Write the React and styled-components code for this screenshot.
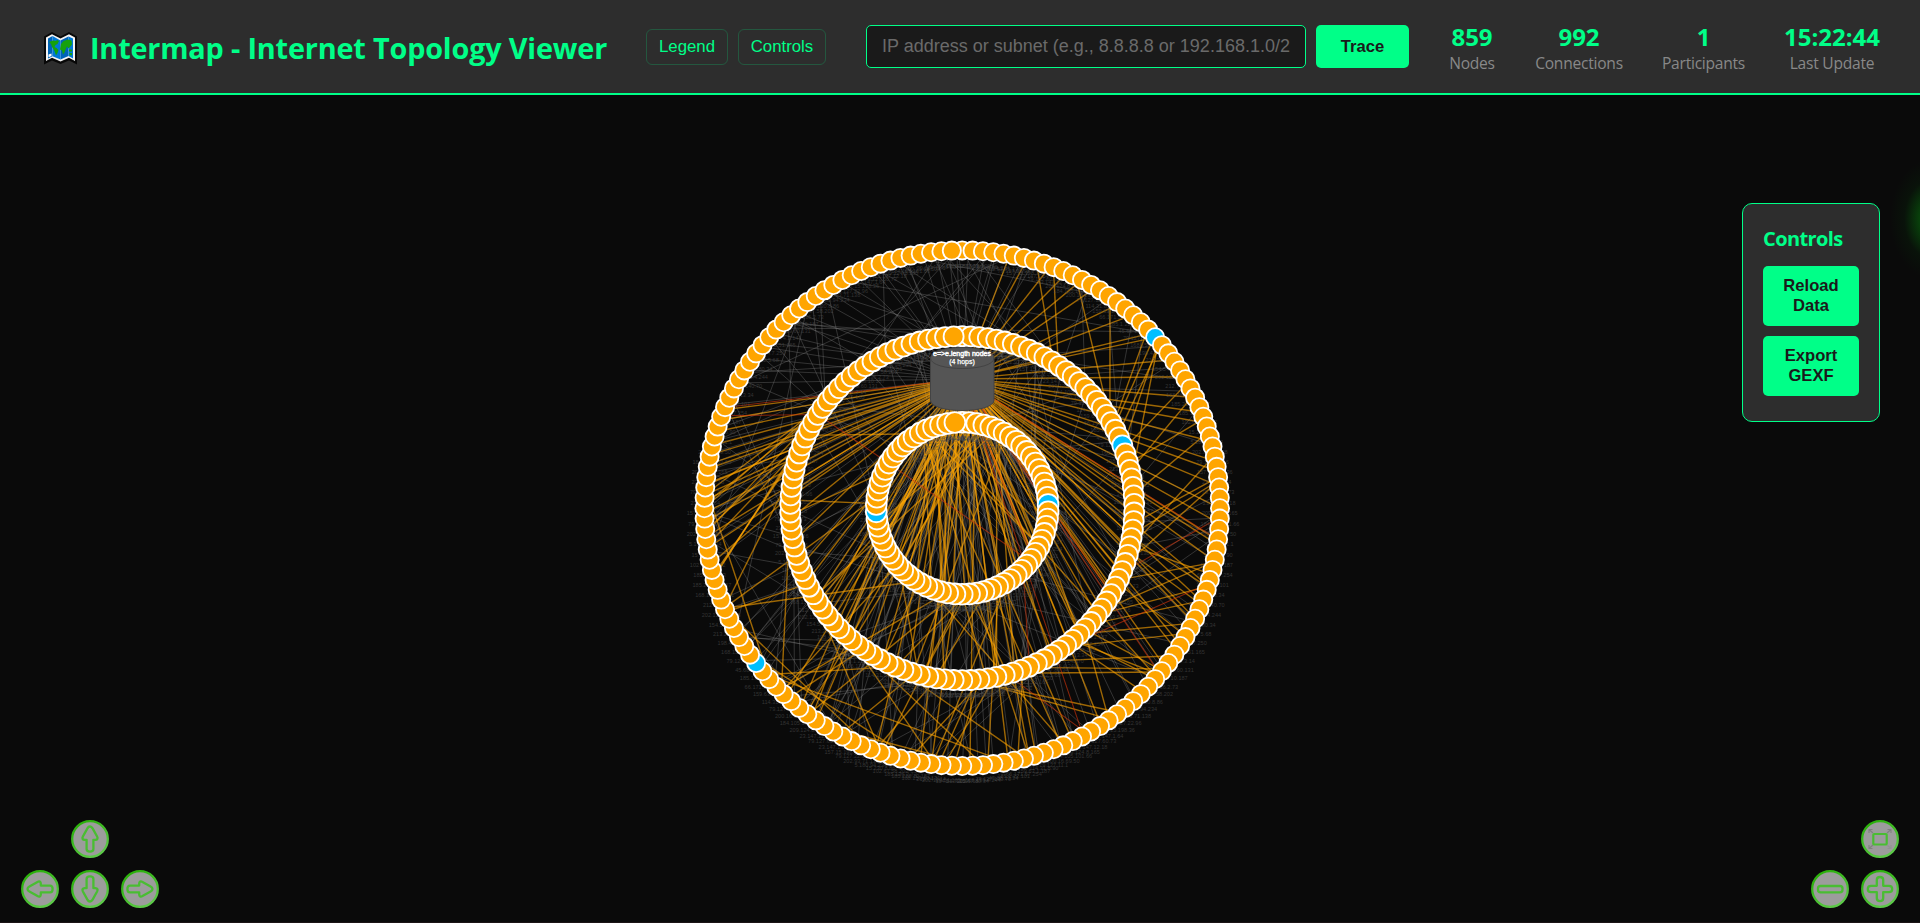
import React from 'react';
import styled, { createGlobalStyle } from 'styled-components';

const GREEN = '#00ff88';
const UI_FONT = '"Open Sans", "Noto Sans", sans-serif';
const CONTROL_FONT = '"Liberation Sans", Arial, sans-serif';

const GlobalStyle = createGlobalStyle`
  * { box-sizing: border-box; margin: 0; }
  body { margin: 0; background: #0a0a0a; color: #e0e0e0; font-family: ${UI_FONT}; overflow: hidden; }
`;

const Page = styled.div`
  display: flex;
  flex-direction: column;
  height: 100vh;
  overflow: hidden;
`;

const Header = styled.header`
  display: flex;
  align-items: center;
  gap: 40px;
  flex: none;
  height: 95px;
  padding: 0 40px;
  background: #2d2d2d;
  border-bottom: 2px solid ${GREEN};
`;

const Brand = styled.h1`
  display: flex;
  align-items: center;
  width: 566px;
  padding: 2px 0 0 3px;
  color: ${GREEN};
  font-size: 28.8px;
  line-height: 38px;
  font-weight: 700;
  letter-spacing: -0.16px;
  white-space: nowrap;
  svg { flex: none; margin-right: 12px; }
`;

const Nav = styled.nav`
  display: flex;
  gap: 10px;
`;

const NavButton = styled.button`
  width: ${(p) => p.$width}px;
  height: 36px;
  padding: 0;
  border: 1px solid rgba(0, 255, 136, 0.2);
  border-radius: 6px;
  background: transparent;
  color: ${GREEN};
  font: 16.8px ${CONTROL_FONT};
`;

const Search = styled.form`
  display: flex;
  gap: 10px;
  height: 43px;
`;

const SearchInput = styled.input`
  width: 440px;
  padding: 0 15px;
  border: 1px solid ${GREEN};
  border-radius: 5px;
  background: #1a1a1a;
  color: #e0e0e0;
  font: 18px ${CONTROL_FONT};
  &::placeholder { color: #6a6a6a; opacity: 1; }
`;

const ActionButton = styled.button`
  padding: 0 20px;
  width: ${(p) => p.$width};
  height: ${(p) => p.$height}px;
  border: 0;
  border-radius: 5px;
  background: ${GREEN};
  color: #1a1a1a;
  font: bold 16.6px/20px ${CONTROL_FONT};
`;

const Stats = styled.div`
  display: flex;
  gap: 40px;
`;

const Stat = styled.div`
  display: flex;
  flex-direction: column;
  align-items: center;
  width: ${(p) => p.$width}px;
  padding-top: 3px;
  white-space: nowrap;
`;

const StatValue = styled.div`
  color: ${GREEN};
  font-size: 24px;
  line-height: 29px;
  font-weight: 700;
`;

const StatLabel = styled.div`
  color: #888;
  font-size: 15.6px;
  line-height: 24px;
  letter-spacing: -0.25px;
`;

const Stage = styled.main`
  position: relative;
  flex: 1;
  overflow: hidden;
  background: #0a0a0a;
  border-bottom: 1px solid #1c1416;
`;

const Network = styled.svg`
  display: block;
  width: 1920px;
  height: 828px;
`;

const Glow = styled.div`
  position: absolute;
  top: 64px;
  right: -54px;
  width: 84px;
  height: 120px;
  background: radial-gradient(closest-side, #07590c 0%, #08400b 30%, rgba(9, 22, 10, 0.7) 66%, rgba(10, 10, 10, 0) 100%);
`;

const Panel = styled.aside`
  position: absolute;
  top: 108px;
  right: 40px;
  display: flex;
  flex-direction: column;
  gap: 10px;
  width: 138px;
  height: 219px;
  padding: 20px;
  border: 1px solid ${GREEN};
  border-radius: 10px;
  background: #2d2d2d;
`;

const PanelTitle = styled.h3`
  height: 32px;
  color: ${GREEN};
  font-size: 20px;
  line-height: 30px;
  letter-spacing: -0.6px;
`;

const PadGrid = styled.div`
  position: absolute;
  bottom: 13px;
  ${(p) => p.$side}: 20px;
  display: grid;
  grid-template-columns: repeat(${(p) => p.$cols}, 40px);
  grid-template-rows: repeat(2, 40px);
  gap: 10px;
  place-items: center;
`;

const PadButton = styled.button`
  grid-column: ${(p) => p.$col};
  grid-row: ${(p) => p.$row};
  width: 38px;
  height: 38px;
  padding: 0;
  border: 0;
  background: none;
  svg { display: block; }
`;

/* Deterministic pseudo random numbers keep the drawing stable between renders. */
function makeRandom(seed) {
  let s = seed;
  return () => {
    s = (s + 0x6d2b79f5) | 0;
    let t = Math.imul(s ^ (s >>> 15), 1 | s);
    t = (t + Math.imul(t ^ (t >>> 7), 61 | t)) ^ t;
    return ((t ^ (t >>> 14)) >>> 0) / 4294967296;
  };
}

const CX = 962.2;
const CY = 413.2;
const HUB = [CX, 284];

const RINGS = [
  { radius: 86, count: 74, size: 10.4, blue: [18, 55] },
  { radius: 172, count: 126, size: 10, blue: [24] },
  { radius: 257.8, count: 156, size: 9.1, blue: [21, 101] },
];

const at = (ring, degrees) => {
  const a = (degrees * Math.PI) / 180;
  const r = RINGS[ring].radius;
  return [CX + r * Math.sin(a), CY - r * Math.cos(a)];
};

const IPS = ['213.202.5.68', '185.1.22.101', '200.16.69.50', '23.147.1.64', '15.230.8.86', '212.74.3.14',
  '168.159.4.244', '159.63.1.187', '209.124.8.165', '79.127.22.96', '185.136.2.73', '154.54.7.250',
  '45.68.13.34', '79.127.11.1', '79.127.60.73', '5.180.94.234', '168.159.60.131', '198.47.80.34',
  '66.171.57.254', '184.105.101.66', '157.15.198.36', '102.67.58.202', '202.122.51.165', '79.127.140.70',
  '114.31.8.90', '23.147.12.18', '202.93.71.138', '185.218.10.187'];

function buildEdges() {
  const rnd = makeRandom(4127);
  const span = (a, b) => a + rnd() * (b - a);
  const gray = [];
  const orange = [];
  const hubFan = (list, ring, from, to, n) => {
    for (let i = 0; i < n; i += 1) {
      list.push([HUB, at(ring, from + ((i + rnd() * 0.9) * (to - from)) / n)]);
    }
  };
  const topFan = (list, source, spread, ring, from, to, n) => {
    for (let i = 0; i < n; i += 1) {
      list.push([at(source, span(-spread, spread)), at(ring, span(from, to))]);
    }
  };
  const chords = (list, r1, r2, from, to, n, lo, hi) => {
    for (let i = 0; i < n; i += 1) {
      const a = span(from, to);
      list.push([at(r1, a), at(r2, a + span(lo, hi))]);
    }
  };

  hubFan(gray, 2, 255, 330, 20);
  hubFan(gray, 2, 335, 378, 15);
  hubFan(gray, 2, 90, 245, 22);
  hubFan(gray, 1, 95, 265, 20);
  hubFan(gray, 0, 60, 300, 14);
  topFan(gray, 0, 34, 2, 110, 250, 22);
  topFan(gray, 0, 40, 0, 100, 260, 22);
  topFan(gray, 1, 36, 1, 110, 250, 22);
  chords(gray, 2, 1, 290, 365, 20, -45, 45);
  chords(gray, 2, 1, 0, 100, 22, -25, 50);
  chords(gray, 2, 1, 185, 290, 38, -50, 50);
  chords(gray, 1, 0, 0, 360, 34, -70, 70);
  chords(gray, 2, 0, 80, 330, 32, -80, 80);
  chords(gray, 2, 2, 200, 350, 12, 30, 110);

  hubFan(orange, 2, 261, 293, 14);
  hubFan(orange, 2, 8, 66, 13);
  hubFan(orange, 2, 66, 130, 18);
  hubFan(orange, 2, 142, 216, 6);
  hubFan(orange, 1, 84, 150, 15);
  hubFan(orange, 1, 205, 282, 12);
  hubFan(orange, 0, 100, 260, 14);
  topFan(orange, 0, 28, 0, 100, 260, 14);
  topFan(orange, 0, 34, 1, 120, 240, 12);
  topFan(orange, 0, 34, 2, 130, 230, 8);
  chords(orange, 2, 1, 14, 90, 17, 5, 34);
  chords(orange, 2, 1, 100, 152, 20, -12, 38);
  chords(orange, 2, 1, 160, 250, 16, -30, 50);
  chords(orange, 2, 0, 150, 250, 12, -50, 50);
  chords(orange, 1, 0, 160, 300, 12, -35, 35);
  chords(orange, 2, 1, 250, 285, 11, 5, 50);
  chords(orange, 2, 2, 168, 250, 5, 25, 75);

  const red = [
    [HUB, at(2, 97)], [HUB, at(2, 130)], [HUB, at(2, 152)], [HUB, at(1, 120)],
    [HUB, at(0, 125)], [at(2, 291), at(1, 303)], [at(2, 293), HUB], [at(1, 303), at(0, 128)],
    [at(1, 112), at(2, 92)], [at(0, 135), at(1, 157)], [at(1, 165), at(2, 151)], [at(1, 145), at(2, 107)],
  ];
  return { gray, orange, red };
}

const EDGES = buildEdges();

function Edges({ list, color, opacity, width }) {
  return (
    <g stroke={color} strokeOpacity={opacity} strokeWidth={width}>
      {list.map(([p, q], i) => (
        <line key={i} x1={p[0]} y1={p[1]} x2={q[0]} y2={q[1]} />
      ))}
    </g>
  );
}

function Ring({ index }) {
  const { count, size, blue } = RINGS[index];
  const nodes = Array.from({ length: count }, (_, i) => {
    const [x, y] = at(index, (i * 360) / count);
    return { i, x, y };
  });
  return (
    <g>
      <g fill="#4c4c4c" fillOpacity="0.65" fontSize="5.6" fontFamily="Liberation Sans, Arial, sans-serif" textAnchor="middle">
        {nodes.map(({ i, x, y }) => (
          <text key={i} x={x} y={y + 17.3}>{IPS[(i * 11 + index * 5) % IPS.length]}</text>
        ))}
      </g>
      <g stroke="#fff" strokeWidth="1.8">
        {nodes.map(({ i, x, y }) => (
          <circle key={i} cx={x} cy={y} r={size} fill={blue.includes(i) ? '#00bfff' : '#ffa500'} />
        ))}
      </g>
    </g>
  );
}

function Topology() {
  return (
    <Network viewBox="0 0 1920 828">
      <Edges list={EDGES.gray} color="#848484" opacity={0.38} width={0.9} />
      <Edges list={EDGES.orange} color="#ffa500" opacity={0.6} width={1.4} />
      <Edges list={EDGES.red} color="#d8350c" opacity={0.6} width={1.1} />
      <Ring index={2} />
      <Ring index={1} />
      <Ring index={0} />
      <path d="M930.5 263v42c0 14 63.5 14 63.5 0v-42c0-14-63.5-14-63.5 0z" fill="#555" stroke="#444" />
      <path d="M930.5 263c0 14 63.5 14 63.5 0" fill="none" stroke="#434343" />
      <g fill="#fff" fontSize="7" fontFamily="Liberation Sans, Arial, sans-serif" textAnchor="middle">
        <text x="962" y="261" stroke="#fff" strokeWidth="0.4">{'e=>e.length nodes'}</text>
        <text x="962" y="268.6" stroke="#fff" strokeWidth="0.25">(4 hops)</text>
      </g>
    </Network>
  );
}

function MapIcon() {
  return (
    <svg width="35" height="34" viewBox="0 0 35 34">
      <path d="M1 5.500 9 1l8.500 4.500L26 1l8 4.500v28L26 29.500l-8.500 3.500L9 29.500 1 33.500z" fill="#080808" />
      <path d="M3 6.500 9 3.200l8.500 4.300L26 3.200l6 3.300V30l-6-3.200-8.500 3.600L9 26.800 3 30z" fill="#f4f4f4" />
      <path d="M5 7.500 9.500 5v20.200L5 27.500zM17.500 9.500 25.500 5.500v19.500l-8 3.600z" fill="#0063b8" />
      <path d="M9.500 5l8 4.500v19.100l-8-3.400zM25.500 5.500 30 7.500v20l-4.500-2.500z" fill="#0078d7" />
      <path d="M6 11l4-1.500 3 .5 1-1 2 1-1.500 3-2 1-1 2 2 1 2 2-1 3-1.500 2.500-1-3-1-2.500-2-3-1-3zM18 13l2.500-3L25 8.500l3.500 1 .5 4-2 2.500-1.500 1.500-1.500-2-1 2-1.500 4-1.500 2-1-4-2-1zM26 18.500h3v2h-3zM26.500 22h2.500v2.200h-2.500z" fill="#16a10c" />
      <path d="M5.500 23.500l3-1v2.500l-3 1.200z" fill="#fff" />
    </svg>
  );
}

const ARROW = 'M19 6.500c1.300 0 2 .8 2.600 1.900l4.500 8.100c1 1.900.3 3.300-1.700 3.300h-2v9.200c0 1.600-1.300 2.600-3.400 2.600s-3.400-1-3.400-2.600v-9.200h-2c-2 0-2.700-1.400-1.700-3.300l4.500-8.100C17 7.300 17.700 6.500 19 6.500z';

const GLYPHS = {
  up: <path d={ARROW} />,
  right: <path d={ARROW} transform="rotate(90 19 19)" />,
  down: <path d={ARROW} transform="rotate(180 19 19)" />,
  left: <path d={ARROW} transform="rotate(270 19 19)" />,
  minus: <rect x="7" y="16" width="24.500" height="6.400" rx="2.600" />,
  plus: <path d="M15.800 10c0-2 1-3 3.200-3s3.200 1 3.200 3v5.800H28c2 0 3.200 1 3.200 3.200s-1.200 3.200-3.200 3.200h-5.800V28c0 2-1 3.200-3.200 3.200s-3.200-1.200-3.200-3.200v-5.800H10c-2 0-3.200-1-3.200-3.200s1.200-3.200 3.200-3.200h5.800z" />,
  fit: (
    <>
      <rect x="12.300" y="14" width="13.400" height="10.500" rx="0.800" strokeWidth="2.200" />
      <g stroke="#808080" strokeWidth="1.100">
        <path d="M8 13V9.500h3.500M8 9.500l4 3.500" />
        <path d="M26.500 9.500H30V13M30 9.500l-4 3.500" />
        <path d="M8 25v3.500h3.500M8 28.500l4-3.500" />
        <path d="M26.500 28.500H30V25M30 28.500 26 25" stroke="#939393" />
      </g>
    </>
  ),
};

function Pad({ kind, col, row }) {
  return (
    <PadButton $col={col} $row={row} aria-label={kind}>
      <svg width="38" height="38" viewBox="0 0 38 38">
        <defs>
          <linearGradient id={`ring-${kind}`} x1="0" y1="0" x2="0.600" y2="1">
            <stop offset="0" stopColor="#22ac00" />
            <stop offset="1" stopColor="#5cc848" />
          </linearGradient>
        </defs>
        <circle cx="19" cy="19" r="17.800" fill="#9c9c9c" stroke={`url(#ring-${kind})`} strokeWidth="2.300" />
        <g fill="none" stroke="#49bd32" strokeWidth="2.300" strokeLinejoin="round">{GLYPHS[kind]}</g>
      </svg>
    </PadButton>
  );
}

const STATS = [
  { value: '859', label: 'Nodes', width: 46 },
  { value: '992', label: 'Connections', width: 88 },
  { value: '1', label: 'Participants', width: 81 },
  { value: '15:22:44', label: 'Last Update', width: 96 },
];

export default function App() {
  return (
    <Page>
      <GlobalStyle />
      <Header>
        <Brand><MapIcon />Intermap - Internet Topology Viewer</Brand>
        <Nav>
          <NavButton $width={82}>Legend</NavButton>
          <NavButton $width={88}>Controls</NavButton>
        </Nav>
        <Search onSubmit={(e) => e.preventDefault()}>
          <SearchInput placeholder="IP address or subnet (e.g., 8.8.8.8 or 192.168.1.0/24)" />
          <ActionButton $width="93px" $height={43}>Trace</ActionButton>
        </Search>
        <Stats>
          {STATS.map((s) => (
            <Stat key={s.label} $width={s.width}>
              <StatValue>{s.value}</StatValue>
              <StatLabel>{s.label}</StatLabel>
            </Stat>
          ))}
        </Stats>
      </Header>
      <Stage>
        <Topology />
        <Glow />
        <Panel>
          <PanelTitle>Controls</PanelTitle>
          <ActionButton $width="100%" $height={60}>Reload Data</ActionButton>
          <ActionButton $width="100%" $height={60}>Export GEXF</ActionButton>
        </Panel>
        <PadGrid $side="left" $cols={3}>
          <Pad kind="up" col={2} row={1} />
          <Pad kind="left" col={1} row={2} />
          <Pad kind="down" col={2} row={2} />
          <Pad kind="right" col={3} row={2} />
        </PadGrid>
        <PadGrid $side="right" $cols={2}>
          <Pad kind="fit" col={2} row={1} />
          <Pad kind="minus" col={1} row={2} />
          <Pad kind="plus" col={2} row={2} />
        </PadGrid>
      </Stage>
    </Page>
  );
}
